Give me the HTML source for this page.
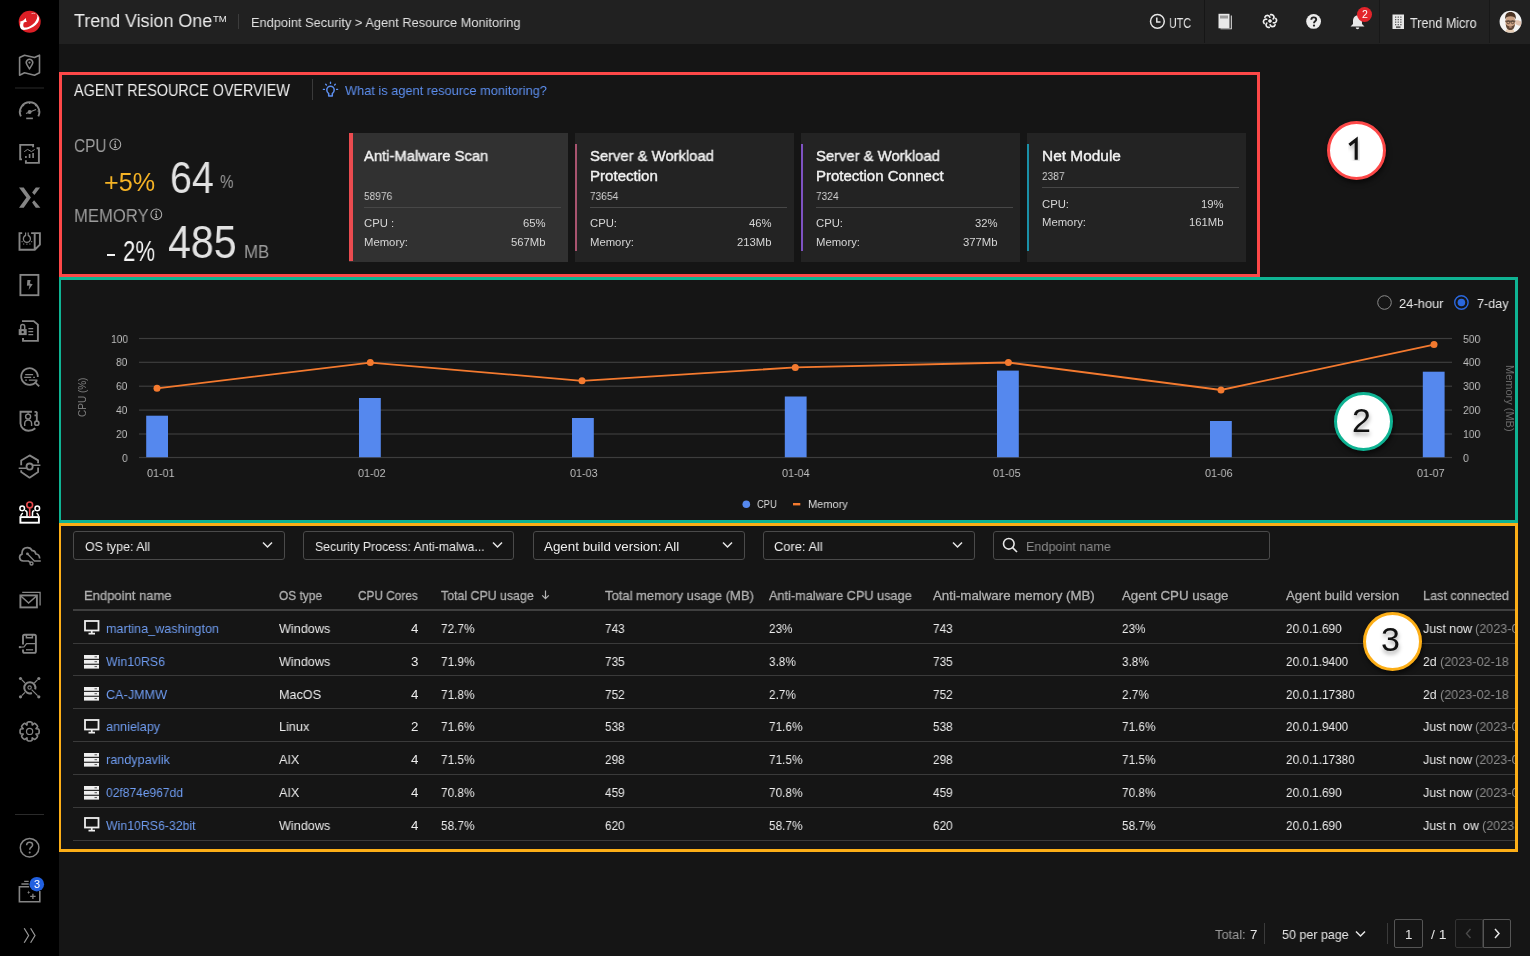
<!DOCTYPE html>
<html><head><meta charset="utf-8">
<style>
*{box-sizing:border-box;margin:0;padding:0}
html,body{width:1530px;height:956px;overflow:hidden;background:#151515;font-family:"Liberation Sans",sans-serif;color:#e6e6e6;position:relative}
.abs{position:absolute}
#side{position:absolute;left:0;top:0;width:59px;height:956px;background:#000;z-index:2}
#side svg{position:absolute}
.t{position:absolute;white-space:pre;line-height:1;will-change:transform}
.box{position:absolute;border:3px solid}
</style></head>
<body>
<div id="side">
<svg style="left:0;top:0" width="59" height="956" viewBox="0 0 59 956" fill="none" stroke="#858585" stroke-width="1.8"><circle cx="29.7" cy="21.7" r="11" fill="#dc1f26" stroke="none"/><path d="M35.2 13.4 C38 14.5 39.6 17 38.9 20.1 C38.2 23.2 34.5 26.8 30.3 28.3 C27 29.6 24 30.4 21.8 29.5 C19.9 28.6 19.6 25.2 20.6 22.6 L19.3 22 L23.2 20.6 L25.9 17.9 L26.1 20.5 L27.1 21.5 L23.9 22.5 C23.1 24.2 23 26.4 23.9 27.2 C25.3 28.2 28.5 27.3 32.6 24.4 C35.6 22.2 37.2 19.1 37.4 16.2 C37.4 15 36.6 14 35.2 13.4 Z" fill="#fff" stroke="none"/><path d="M31.5 13.6 C33 13.2 34.3 13.2 35.3 13.5" stroke="#f4c5c5" stroke-width="0.8"/><path d="M19.6 57.5 L24.5 55.2 L34.5 57.5 L39.5 55.2 L39.5 72.8 L34.5 75.2 L24.5 72.8 L19.6 75.2 Z" stroke-width="1.6" stroke-linejoin="round"/><path d="M29.5 69 L26.8 64.3 A3.2 3.2 0 1 1 32.2 64.3 Z" stroke-width="1.5" stroke-linejoin="round"/><circle cx="29.5" cy="62.6" r="1.1" fill="#858585" stroke="none"/><path d="M15 88 L44 88" stroke="#2a2a2a" stroke-width="1"/><path d="M20.9 116.3 A9.7 9.7 0 1 1 38.3 116.3" stroke-width="1.9"/><path d="M29.6 102.3 L29.6 104 M23 105 L24 106 M36.2 105 L35.2 106 M20.4 111 L21.6 111.2 M38.8 111 L37.6 111.2" stroke-width="1.2"/><circle cx="29.6" cy="112" r="2" fill="#858585" stroke="none"/><path d="M26 113.4 L36.1 109.4" stroke-width="1.1"/><path d="M26.2 118.4 L32.9 118.4" stroke-width="1.6"/><path d="M22 159.4 L20.2 159.4 L20.2 144.9 L33.1 144.9 L33.1 147.2" stroke-width="1.9"/><path d="M36.6 148.3 L38.9 148.3 L38.9 162.9 L25.9 162.9 L25.9 160.3" stroke-width="1.9"/><path d="M25.9 156 L25.9 157.9 M29.6 154.1 L29.6 158 M33.1 153.1 L33.1 158" stroke-width="1.6"/><path d="M24.2 151.7 L27.6 149.4 L31.4 151.6 L34.7 149.5" stroke-width="1"/><path d="M19 187.5 L23.7 187.5 L30.9 197.6 L23.7 207.8 L19 207.8 L26.4 197.6 Z M35.8 187.5 L40.1 187.5 L34.4 194.9 L32.1 192.4 Z M34.1 200.2 L40.4 207.8 L35.8 207.8 L32.1 202.4 Z" fill="#858585" stroke="none"/><path d="M22.2 233.1 L19.5 233.1 L19.5 249.7 L34.8 249.7 L39.9 244.6 L39.9 233.1 L31.1 233.1 M34.7 233.1 L34.7 249.7" stroke-width="1.9"/><path d="M25.6 232.5 L25.6 235.4 C23.8 236.3 23.2 238 23.4 239.5 C23.8 241.4 25.3 242.4 26.9 242.4 C28.5 242.4 30 241.4 30.4 239.5 C30.6 238 30 236.3 28.2 235.4 L28.2 232.5" stroke-width="1.2"/><path d="M21.6 241.6 L22.6 241.6 M31.2 241.6 L32.2 241.6 M23.9 243.5 L23.5 244.5 M26.9 243.6 L26.9 244.7 M29.7 243.5 L30.1 244.5" stroke-width="1.1"/><rect x="20.4" y="274.9" width="18" height="20.3" stroke-width="1.85"/><path d="M27.4 280 L30.7 280 L29.8 283.6 L32.7 284.3 L28.6 290 L29.5 285.6 L26.9 285.7 Z" fill="#858585" stroke="none"/><path d="M22 321.1 L33.7 321.1 L37.9 324.6 L37.9 340.9 L23 340.9 L23 338.1" stroke-width="1.9"/><rect x="18.7" y="329.1" width="8" height="6" fill="#858585" stroke="none"/><circle cx="22.7" cy="332.1" r="1.2" fill="#000" stroke="none"/><path d="M20.7 329.2 L20.7 326.6 A2 2 0 0 1 24.7 326.6 L24.7 329.2" stroke-width="1.5"/><path d="M28.4 328.6 L33.2 328.6 M28.4 331.6 L33.2 331.6 M28.4 334.6 L33.2 334.6" stroke-width="1.2"/><path d="M36.9 380.3 A8.3 8.3 0 1 1 37.8 377" stroke-width="1.8"/><path d="M35.6 382.8 L39.2 386.3" stroke-width="1.8"/><path d="M25.2 374.6 L33.1 374.6 M24.2 377.4 L31.2 377.4 M33.2 377.4 L34.9 377.4 M25.2 380.2 L26.9 380.2 M28.9 380.2 L37.4 380.2" stroke-width="1.3"/><path d="M31.9 411.8 L20.5 411.8 L20.5 423.5 C20.8 427.8 24.5 430.8 28.5 430.8 C31 430.8 33.5 429.8 35.3 428.2" stroke-width="1.9"/><circle cx="28.1" cy="416.6" r="2.5" stroke-width="1.4"/><path d="M24.7 425.9 L24.7 423.5 A3.45 3.45 0 0 1 31.6 423.5 L31.6 425.9" stroke-width="1.4"/><path d="M28.1 412 L28.1 414" stroke-width="1"/><path d="M36.8 411.8 L36.8 421.2 M34.5 411.8 L36.8 411.8 M34.5 415.4 L36.8 415.4" stroke-width="1.8"/><circle cx="36.8" cy="423.2" r="2.1" stroke-width="1.6"/><path d="M21.2 465.3 L21.2 460.4 L29.6 455.4 L38.1 460.4 L38.1 463.3 M38.1 467.6 L38.1 472.1 L29.6 477.7 L21.2 472.1 L21.2 470.2" stroke-width="1.8" stroke-linejoin="round"/><circle cx="29.6" cy="466.6" r="3.1" stroke-width="1.8"/><path d="M18.7 468.2 L26.4 468.2 M32.8 465.2 L40.4 465.2" stroke-width="1.5"/><rect x="20.4" y="517.1" width="18.5" height="5.6" stroke="#fff" stroke-width="1.9"/><path d="M20.8 516.2 C21 514.8 21.7 513.8 22.9 513.1 M27 516.4 L27 512.8 C27 511.3 26.2 510.6 25 510.4 M32.5 516.4 L32.5 512.8 C32.5 511.3 33.3 510.6 34.5 510.4 M38.6 516.2 C38.4 514.8 37.7 513.8 36.6 513.1" stroke="#fff" stroke-width="1.5"/><circle cx="22.2" cy="508.4" r="2.3" stroke="#fff" stroke-width="1.5"/><circle cx="37.3" cy="508.4" r="2.3" stroke="#fff" stroke-width="1.5"/><circle cx="29.7" cy="504.9" r="2.9" stroke="#e8494d" stroke-width="1.6"/><path d="M29.7 507.8 L29.7 516.3" stroke="#e8494d" stroke-width="1.6"/><path d="M39.7 558.5 C39.6 556.2 38.2 554.3 35.9 554 C35.3 551.5 33.8 550.3 32.1 550.6 C31 548.3 29.2 547.5 27.2 547.6 C24.3 547.7 22.2 549.8 22 552.8 L22 554.1 C20.4 554.6 19.5 556 19.6 557.7 C19.8 559.8 21.2 561 23.3 561 L28.4 561 L30.6 562.6" stroke-width="1.7"/><circle cx="27.4" cy="553.8" r="1.4" fill="#858585" stroke="none"/><path d="M27.4 553.8 L34.4 561 L40.8 561" stroke-width="1.3"/><circle cx="31.5" cy="563.5" r="1.5" stroke-width="1.4"/><rect x="20.4" y="595.4" width="16.5" height="12" stroke-width="1.9"/><path d="M20.8 596 L28.6 603.1 L36.5 596" stroke-width="1.5"/><path d="M22.2 592.3 L40.1 592.3 L40.1 605.5" stroke-width="1.3"/><path d="M23 644.4 L23 636.3 Q23 634.7 24.6 634.7 L34.3 634.7 Q35.9 634.7 35.9 636.3 L35.9 651.3 Q35.9 652.9 34.3 652.9 L24.6 652.9 Q23 652.9 23 651.3 L23 649.4" stroke-width="1.9"/><path d="M26.4 635 L26.4 637.7 L32.4 637.7 L32.4 635" stroke-width="1.5"/><path d="M20.5 647.1 L24 646.8 L26.6 643.6 L35.4 643.6" stroke-width="1.2"/><circle cx="19.9" cy="647.1" r="1.2" fill="#858585" stroke="none"/><path d="M26 649.8 L33.1 649.8" stroke-width="1.3"/><g fill="#858585" stroke="none"><circle cx="20.5" cy="678.5" r="1.6"/><circle cx="38.8" cy="678.5" r="1.6"/><circle cx="20.5" cy="696.8" r="1.6"/><circle cx="38.8" cy="696.8" r="1.6"/></g><path d="M21.7 679.7 L25 683 M37.6 679.7 L34.3 683 M21.7 695.6 L25 692.3 M31.6 689.6 L37.6 695.6" stroke-width="1.2"/><path d="M31.9 693 A5.6 5.6 0 1 1 35.2 689.4" stroke-width="2"/><circle cx="29.6" cy="687.6" r="1.7" stroke-width="1.1"/><path d="M27.19 722.42 L28.43 721.87 L30.77 721.87 L32.01 722.42 L32.24 725.03 L34.25 723.35 L35.51 723.84 L37.16 725.49 L37.65 726.75 L35.97 728.76 L38.58 728.99 L39.13 730.23 L39.13 732.57 L38.58 733.81 L35.97 734.04 L37.65 736.05 L37.16 737.31 L35.51 738.96 L34.25 739.45 L32.24 737.77 L32.01 740.38 L30.77 740.93 L28.43 740.93 L27.19 740.38 L26.96 737.77 L24.95 739.45 L23.69 738.96 L22.04 737.31 L21.55 736.05 L23.23 734.04 L20.62 733.81 L20.07 732.57 L20.07 730.23 L20.62 728.99 L23.23 728.76 L21.55 726.75 L22.04 725.49 L23.69 723.84 L24.95 723.35 L26.96 725.03 Z" stroke-width="1.6" stroke-linejoin="round"/><circle cx="29.6" cy="731.4" r="3.1" stroke-width="1.2"/><path d="M15 814.5 L44 814.5" stroke="#2a2a2a" stroke-width="1"/><circle cx="29.6" cy="847.7" r="9.3" stroke-width="1.5"/><path d="M26.6 845.3 C26.6 843.2 28 842.2 29.6 842.2 C31.4 842.2 32.6 843.4 32.6 844.9 C32.6 847 29.7 847.3 29.7 849.8" stroke-width="1.5"/><circle cx="29.7" cy="852.6" r="1" fill="#858585" stroke="none"/><path d="M29.1 886.7 L19.4 886.7 L19.4 901.8 L39.8 901.8 L39.8 891" stroke-width="1.6"/><path d="M24.2 881.4 L28.7 881.4 M21.4 884 L28.7 884" stroke-width="1.3"/><path d="M28.7 890.6 L29.2 892 L30.5 892.4 L29.2 892.8 L28.7 894.2 L28.2 892.8 L26.9 892.4 L28.2 892 Z" fill="#858585" stroke="none"/><path d="M30.2 896.4 L35.6 896.4 M32.9 893.7 L32.9 899.1" stroke-width="1.3"/><circle cx="36.8" cy="884.2" r="7.3" fill="#2160e0" stroke="none"/><path d="M24.2 928.2 L28.6 935.5 L24.2 942.8 M30.6 928.2 L35 935.5 L30.6 942.8" stroke="#9a9a9a" stroke-width="1.2"/></svg>
<div class="t" style="left:33.74px;top:878.99px;font-size:11.00px;color:#fff;">3</div>
</div>
<div class="abs" style="left:59.00px;top:0.00px;width:1471.00px;height:44.00px;background:#212121;"></div>
<div class="t" style="left:74.00px;top:11.77px;font-size:18.70px;color:#ececec;transform:scaleX(0.9572);transform-origin:0 0;">Trend Vision One</div>
<div class="t" style="left:212.60px;top:14.07px;font-size:9.60px;color:#ececec;">TM</div>
<div class="abs" style="left:238.00px;top:14.00px;width:1.00px;height:15.00px;background:#3c3c3c;"></div>
<div class="t" style="left:250.50px;top:16.07px;font-size:13.50px;color:#e0e0e0;transform:scaleX(0.9488);transform-origin:0 0;">Endpoint Security &gt; Agent Resource Monitoring</div>
<svg class="abs" style="left:1149px;top:13px" width="17" height="17" viewBox="0 0 17 17" fill="none" stroke="#e6e6e6" stroke-width="1.5"><circle cx="8.4" cy="8.3" r="6.9"/><path d="M7.8 4.5 L7.8 9 L11.5 9"/></svg>
<div class="t" style="left:1169.00px;top:15.65px;font-size:14.00px;color:#e6e6e6;transform:scaleX(0.7646);transform-origin:0 0;">UTC</div>
<div class="abs" style="left:1203.50px;top:0.00px;width:1.00px;height:43.00px;background:#161616;"></div>
<svg class="abs" style="left:1218px;top:13px" width="15" height="17" viewBox="0 0 15 17"><rect x="0.5" y="0.8" width="11" height="14.5" fill="#e8e8e8"/><rect x="2" y="2.5" width="8" height="3" fill="#9a9a9a"/><path d="M12.8 2.5 L13.8 2.5 L13.8 16.3 L2.5 16.3 L2.5 15.5 L12.8 15.5 Z" fill="#e8e8e8"/></svg>
<svg class="abs" style="left:1257.7px;top:9.3px" width="24" height="24" viewBox="0 0 24 24" fill="none" stroke="#f0f0f0" stroke-width="1.7" stroke-linecap="round"><path d="M12.74 5.68 A2.55 2.55 0 0 1 15.21 9.95" /><path d="M17.84 9.48 A2.55 2.55 0 0 1 15.38 13.75" /><path d="M17.10 15.80 A2.55 2.55 0 0 1 12.17 15.80" /><path d="M11.26 18.32 A2.55 2.55 0 0 1 8.79 14.05" /><path d="M6.16 14.52 A2.55 2.55 0 0 1 8.62 10.25" /><path d="M6.90 8.20 A2.55 2.55 0 0 1 11.83 8.20" /><path d="M12 9.9 L13.2 10.8 L14.1 12 L13.2 13.2 L12 14.1 L10.8 13.2 L9.9 12 L10.8 10.8 Z" fill="#f0f0f0" stroke="none"/></svg>
<svg class="abs" style="left:1306px;top:14px" width="16" height="16" viewBox="0 0 16 16"><circle cx="7.6" cy="7.4" r="7.4" fill="#ececec"/><path d="M5.3 5.8 C5.3 4.2 6.4 3.4 7.7 3.4 C9.2 3.4 10.2 4.3 10.2 5.6 C10.2 7.3 8 7.4 8 9.2" fill="none" stroke="#222" stroke-width="1.9"/><circle cx="8" cy="11.6" r="1.15" fill="#222"/></svg>
<svg class="abs" style="left:1349px;top:13px" width="18" height="17" viewBox="0 0 18 17"><path d="M8.5 2.5 C5.5 2.5 4 5 4 8 L4 11 L1.5 13.5 L15.5 13.5 L13 11 L13 8 C13 5 11.5 2.5 8.5 2.5 Z" fill="#e8e8e8"/><path d="M6.8 14.5 L10.2 14.5 C10.2 15.6 9.5 16.2 8.5 16.2 C7.5 16.2 6.8 15.6 6.8 14.5 Z" fill="#e8e8e8"/></svg>
<div class="abs" style="left:1357px;top:7px;width:15px;height:15px;border-radius:50%;background:#e3242b"></div>
<div class="t" style="left:1361.68px;top:9.41px;font-size:10.50px;color:#fff;">2</div>
<div class="abs" style="left:1379.00px;top:0.00px;width:1.00px;height:43.00px;background:#181818;"></div>
<svg class="abs" style="left:1392px;top:14px" width="13" height="16" viewBox="0 0 13 16"><rect x="0.5" y="0.5" width="11.5" height="14.5" fill="#e8e8e8"/><g fill="#5a5a5a"><rect x="3" y="2.5" width="1.3" height="1.3"/><rect x="5.6" y="2.5" width="1.3" height="1.3"/><rect x="8.2" y="2.5" width="1.3" height="1.3"/><rect x="3" y="5" width="1.3" height="1.3"/><rect x="5.6" y="5" width="1.3" height="1.3"/><rect x="8.2" y="5" width="1.3" height="1.3"/><rect x="3" y="7.5" width="1.3" height="1.3"/><rect x="5.6" y="7.5" width="1.3" height="1.3"/><rect x="8.2" y="7.5" width="1.3" height="1.3"/><rect x="3" y="10" width="1.3" height="1.3"/><rect x="5.6" y="10" width="1.3" height="1.3"/><rect x="8.2" y="10" width="1.3" height="1.3"/><rect x="4" y="12.3" width="4.5" height="1.8"/></g></svg>
<div class="t" style="left:1409.50px;top:15.65px;font-size:14.00px;color:#e6e6e6;transform:scaleX(0.8966);transform-origin:0 0;">Trend Micro</div>
<div class="abs" style="left:1488.50px;top:0.00px;width:1.00px;height:43.00px;background:#181818;"></div>
<svg class="abs" style="left:1496px;top:7px" width="30" height="30" viewBox="0 0 30 30"><defs><clipPath id="avc"><circle cx="14.6" cy="14.7" r="10.9"/></clipPath></defs><circle cx="14.6" cy="14.7" r="11" fill="#f4f4f4"/><g clip-path="url(#avc)"><path d="M8.5 27 C9 23 11 21.5 14 21.5 C17 21.5 18.5 23 19 27 Z" fill="#e6cdb5"/><ellipse cx="14.4" cy="15" rx="5" ry="7" fill="#caa184"/><path d="M9.2 12.5 C8.8 7 11 5 14.5 5 C18 5 20.3 7 19.8 12.5 C19 10 17.5 9.3 14.5 9.3 C11.5 9.3 10 10 9.2 12.5 Z" fill="#4b3424"/><path d="M9.8 17 C10 21.5 12 23 14.4 23 C16.8 23 18.6 21.5 18.9 17 C18 18.5 16.5 19.5 14.4 19.5 C12.3 19.5 10.8 18.5 9.8 17 Z" fill="#5e4636"/><ellipse cx="14.4" cy="20" rx="1.6" ry="0.8" fill="#b88a78"/><path d="M9.3 14.3 L19.6 14.3" stroke="#6e5a4c" stroke-width="1.6"/><circle cx="12.3" cy="15.2" r="1.5" fill="none" stroke="#5a463a" stroke-width="0.9"/><circle cx="16.6" cy="15.2" r="1.5" fill="none" stroke="#5a463a" stroke-width="0.9"/><path d="M19.5 13.5 C21.5 13 24 13.5 25.5 15 L25.5 19 C23.5 19 21 18 19.5 17 Z" fill="#e2c3b0"/></g></svg>
<div class="t" style="left:74.00px;top:82.11px;font-size:16.40px;color:#f0f0f0;transform:scaleX(0.8768);transform-origin:0 0;">AGENT RESOURCE OVERVIEW</div>
<div class="abs" style="left:312.00px;top:79.00px;width:1.00px;height:21.00px;background:#3a3a3a;"></div>
<svg class="abs" style="left:318px;top:78px" width="24" height="24" viewBox="0 0 24 24" fill="none" stroke="#5d8ff0" stroke-width="1.5" stroke-linecap="round"><path d="M10.7 15.6 C9.5 14.8 8.8 13.5 8.8 12 A3.7 3.7 0 0 1 16.2 12 C16.2 13.5 15.5 14.8 14.3 15.6 L14.3 17.9 L10.7 17.9 Z" stroke-linejoin="round"/><path d="M12.5 4.2 L12.5 5.4 M7.7 6.2 L8.4 6.9 M17.3 6.2 L16.6 6.9 M5.4 11.4 L6.4 11.4 M18.6 11.4 L19.6 11.4" stroke-width="1.4"/></svg>
<div class="t" style="left:345.00px;top:83.57px;font-size:13.50px;color:#5d8ff0;transform:scaleX(0.9479);transform-origin:0 0;">What is agent resource monitoring?</div>
<div class="t" style="left:73.70px;top:137.18px;font-size:18.80px;color:#9c9c9c;transform:scaleX(0.8213);transform-origin:0 0;">CPU</div>
<svg class="abs" style="left:109px;top:138px" width="13" height="13" viewBox="0 0 13 13"><circle cx="6.3" cy="6.4" r="5.4" fill="none" stroke="#a8a8a8" stroke-width="1.1"/><circle cx="6.3" cy="3.7" r="0.9" fill="#a8a8a8"/><path d="M5 5.5 L6.9 5.5 L6.9 9 L7.7 9 L7.7 9.9 L4.9 9.9 L4.9 9 L5.7 9 L5.7 6.4 L5 6.4 Z" fill="#a8a8a8"/></svg>
<div class="t" style="left:103.80px;top:170.43px;font-size:25.00px;color:#f5b325;transform:scaleX(1.0053);transform-origin:0 0;">+5%</div>
<div class="t" style="left:170.00px;top:155.00px;font-size:45.00px;color:#e2e2e2;transform:scaleX(0.8750);transform-origin:0 0;">64</div>
<div class="t" style="left:219.80px;top:173.78px;font-size:17.50px;color:#9c9c9c;transform:scaleX(0.8740);transform-origin:0 0;">%</div>
<div class="t" style="left:74.30px;top:206.76px;font-size:18.00px;color:#9c9c9c;transform:scaleX(0.9247);transform-origin:0 0;">MEMORY</div>
<svg class="abs" style="left:150px;top:208px" width="13" height="13" viewBox="0 0 13 13"><circle cx="6.3" cy="6.4" r="5.4" fill="none" stroke="#a8a8a8" stroke-width="1.1"/><circle cx="6.3" cy="3.7" r="0.9" fill="#a8a8a8"/><path d="M5 5.5 L6.9 5.5 L6.9 9 L7.7 9 L7.7 9.9 L4.9 9.9 L4.9 9 L5.7 9 L5.7 6.4 L5 6.4 Z" fill="#a8a8a8"/></svg>
<div class="abs" style="left:106.80px;top:253.50px;width:8.00px;height:2.00px;background:#f4f4f4;"></div>
<div class="t" style="left:122.90px;top:237.45px;font-size:29.00px;color:#f4f4f4;transform:scaleX(0.7635);transform-origin:0 0;">2%</div>
<div class="t" style="left:168.40px;top:219.98px;font-size:45.50px;color:#e2e2e2;transform:scaleX(0.9049);transform-origin:0 0;">485</div>
<div class="t" style="left:243.90px;top:243.68px;font-size:17.50px;color:#9c9c9c;transform:scaleX(0.9638);transform-origin:0 0;">MB</div>
<div class="abs" style="left:349.00px;top:133.00px;width:219.00px;height:129.00px;background:#313131;"></div>
<div class="abs" style="left:349.00px;top:133.00px;width:3.50px;height:128.00px;background:#ea4b4f;"></div>
<div class="t" style="left:363.50px;top:148.10px;font-size:15.00px;color:#f2f2f2;transform:scaleX(0.9874);transform-origin:0 0;-webkit-text-stroke:0.4px #f2f2f2;">Anti-Malware Scan</div>
<div class="t" style="left:363.50px;top:190.81px;font-size:11.80px;color:#cfcfcf;transform:scaleX(0.8600);transform-origin:0 0;">58976</div>
<div class="abs" style="left:363.50px;top:207.00px;width:197.50px;height:1.00px;background:#474747;"></div>
<div class="t" style="left:363.50px;top:218.43px;font-size:11.30px;color:#d6d6d6;">CPU :</div>
<div class="t" style="left:363.50px;top:236.53px;font-size:11.30px;color:#d6d6d6;">Memory:</div>
<div class="t" style="left:522.88px;top:218.43px;font-size:11.30px;color:#d6d6d6;">65%</div>
<div class="t" style="left:510.95px;top:236.53px;font-size:11.30px;color:#d6d6d6;">567Mb</div>
<div class="abs" style="left:575.00px;top:133.00px;width:219.00px;height:129.00px;background:#232323;"></div>
<div class="abs" style="left:575.00px;top:143.80px;width:2.00px;height:107.50px;background:#a8536f;"></div>
<div class="t" style="left:589.80px;top:148.10px;font-size:15.00px;color:#f2f2f2;transform:scaleX(0.9864);transform-origin:0 0;-webkit-text-stroke:0.4px #f2f2f2;">Server &amp; Workload</div>
<div class="t" style="left:589.80px;top:168.10px;font-size:15.00px;color:#f2f2f2;transform:scaleX(1.0053);transform-origin:0 0;-webkit-text-stroke:0.4px #f2f2f2;">Protection</div>
<div class="t" style="left:589.80px;top:190.81px;font-size:11.80px;color:#cfcfcf;transform:scaleX(0.8600);transform-origin:0 0;">73654</div>
<div class="abs" style="left:589.80px;top:207.00px;width:197.20px;height:1.00px;background:#474747;"></div>
<div class="t" style="left:589.80px;top:218.43px;font-size:11.30px;color:#d6d6d6;">CPU:</div>
<div class="t" style="left:589.80px;top:236.53px;font-size:11.30px;color:#d6d6d6;">Memory:</div>
<div class="t" style="left:748.88px;top:218.43px;font-size:11.30px;color:#d6d6d6;">46%</div>
<div class="t" style="left:736.95px;top:236.53px;font-size:11.30px;color:#d6d6d6;">213Mb</div>
<div class="abs" style="left:801.00px;top:133.00px;width:219.00px;height:129.00px;background:#232323;"></div>
<div class="abs" style="left:801.00px;top:143.80px;width:2.00px;height:107.50px;background:#7e52c2;"></div>
<div class="t" style="left:815.80px;top:148.10px;font-size:15.00px;color:#f2f2f2;transform:scaleX(0.9864);transform-origin:0 0;-webkit-text-stroke:0.4px #f2f2f2;">Server &amp; Workload</div>
<div class="t" style="left:815.80px;top:168.10px;font-size:15.00px;color:#f2f2f2;-webkit-text-stroke:0.4px #f2f2f2;">Protection Connect</div>
<div class="t" style="left:815.80px;top:190.81px;font-size:11.80px;color:#cfcfcf;transform:scaleX(0.8600);transform-origin:0 0;">7324</div>
<div class="abs" style="left:815.80px;top:207.00px;width:197.20px;height:1.00px;background:#474747;"></div>
<div class="t" style="left:815.80px;top:218.43px;font-size:11.30px;color:#d6d6d6;">CPU:</div>
<div class="t" style="left:815.80px;top:236.53px;font-size:11.30px;color:#d6d6d6;">Memory:</div>
<div class="t" style="left:974.88px;top:218.43px;font-size:11.30px;color:#d6d6d6;">32%</div>
<div class="t" style="left:962.95px;top:236.53px;font-size:11.30px;color:#d6d6d6;">377Mb</div>
<div class="abs" style="left:1027.00px;top:133.00px;width:219.00px;height:129.00px;background:#232323;"></div>
<div class="abs" style="left:1027.00px;top:143.80px;width:2.00px;height:107.50px;background:#1a90a8;"></div>
<div class="t" style="left:1041.80px;top:148.10px;font-size:15.00px;color:#f2f2f2;transform:scaleX(1.0286);transform-origin:0 0;-webkit-text-stroke:0.4px #f2f2f2;">Net Module</div>
<div class="t" style="left:1041.80px;top:170.71px;font-size:11.80px;color:#cfcfcf;transform:scaleX(0.8600);transform-origin:0 0;">2387</div>
<div class="abs" style="left:1041.80px;top:187.40px;width:197.20px;height:1.00px;background:#474747;"></div>
<div class="t" style="left:1041.80px;top:198.53px;font-size:11.30px;color:#d6d6d6;">CPU:</div>
<div class="t" style="left:1041.80px;top:216.63px;font-size:11.30px;color:#d6d6d6;">Memory:</div>
<div class="t" style="left:1200.88px;top:198.53px;font-size:11.30px;color:#d6d6d6;">19%</div>
<div class="t" style="left:1188.95px;top:216.63px;font-size:11.30px;color:#d6d6d6;">161Mb</div>
<svg class="abs" style="left:1376px;top:294px" width="140" height="17" viewBox="0 0 140 17"><circle cx="8.5" cy="8.5" r="6.8" fill="none" stroke="#8a8a8a" stroke-width="1"/><circle cx="85.4" cy="8.5" r="6.7" fill="none" stroke="#2a67dd" stroke-width="1.4"/><circle cx="85.4" cy="8.5" r="3.8" fill="#2a67dd"/></svg>
<div class="t" style="left:1399.40px;top:296.82px;font-size:13.20px;color:#e8e8e8;transform:scaleX(0.9802);transform-origin:0 0;">24-hour</div>
<div class="t" style="left:1476.90px;top:296.82px;font-size:13.20px;color:#e8e8e8;transform:scaleX(0.9539);transform-origin:0 0;">7-day</div>
<svg class="abs" style="left:0;top:0" width="1530" height="956" viewBox="0 0 1530 956">
<rect x="139" y="337.9" width="1313" height="1.2" fill="#3d3d3d"/>
<rect x="139" y="361.7" width="1313" height="1.2" fill="#3d3d3d"/>
<rect x="139" y="385.6" width="1313" height="1.2" fill="#3d3d3d"/>
<rect x="139" y="409.5" width="1313" height="1.2" fill="#3d3d3d"/>
<rect x="139" y="433.4" width="1313" height="1.2" fill="#3d3d3d"/>
<rect x="139" y="456.9" width="1313" height="1.2" fill="#3d3d3d"/>
<rect x="146.2" y="415.7" width="21.8" height="41.5" fill="#5588ee"/>
<rect x="359.0" y="398.0" width="21.8" height="59.2" fill="#5588ee"/>
<rect x="572.0" y="418.0" width="21.8" height="39.2" fill="#5588ee"/>
<rect x="784.8" y="396.5" width="21.8" height="60.7" fill="#5588ee"/>
<rect x="997.0" y="370.6" width="21.8" height="86.6" fill="#5588ee"/>
<rect x="1210.0" y="421.0" width="21.8" height="36.2" fill="#5588ee"/>
<rect x="1422.8" y="371.7" width="21.8" height="85.5" fill="#5588ee"/>
<polyline points="157.0,388.3 370.3,362.6 582.0,380.8 795.3,367.4 1008.4,362.5 1221.0,390.0 1434.0,344.6" fill="none" stroke="#f47a2f" stroke-width="1.8"/>
<circle cx="157.0" cy="388.3" r="3.5" fill="#f47a2f"/>
<circle cx="370.3" cy="362.6" r="3.5" fill="#f47a2f"/>
<circle cx="582.0" cy="380.8" r="3.5" fill="#f47a2f"/>
<circle cx="795.3" cy="367.4" r="3.5" fill="#f47a2f"/>
<circle cx="1008.4" cy="362.5" r="3.5" fill="#f47a2f"/>
<circle cx="1221.0" cy="390.0" r="3.5" fill="#f47a2f"/>
<circle cx="1434.0" cy="344.6" r="3.5" fill="#f47a2f"/>
<circle cx="746.3" cy="504.3" r="3.8" fill="#5588ee"/>
<rect x="793" y="503" width="7.3" height="2.4" fill="#f47a2f"/>
</svg>
<div class="t" style="left:110.69px;top:333.52px;font-size:11.20px;color:#bdbdbd;transform:scaleX(0.9100);transform-origin:0 0;">100</div>
<div class="t" style="left:116.36px;top:357.32px;font-size:11.20px;color:#bdbdbd;transform:scaleX(0.9100);transform-origin:0 0;">80</div>
<div class="t" style="left:116.36px;top:381.22px;font-size:11.20px;color:#bdbdbd;transform:scaleX(0.9100);transform-origin:0 0;">60</div>
<div class="t" style="left:116.36px;top:405.12px;font-size:11.20px;color:#bdbdbd;transform:scaleX(0.9100);transform-origin:0 0;">40</div>
<div class="t" style="left:116.36px;top:429.02px;font-size:11.20px;color:#bdbdbd;transform:scaleX(0.9100);transform-origin:0 0;">20</div>
<div class="t" style="left:122.03px;top:452.52px;font-size:11.20px;color:#bdbdbd;transform:scaleX(0.9100);transform-origin:0 0;">0</div>
<div class="t" style="left:1463.40px;top:333.52px;font-size:11.20px;color:#bdbdbd;transform:scaleX(0.9250);transform-origin:0 0;">500</div>
<div class="t" style="left:1463.40px;top:357.32px;font-size:11.20px;color:#bdbdbd;transform:scaleX(0.9250);transform-origin:0 0;">400</div>
<div class="t" style="left:1463.40px;top:381.22px;font-size:11.20px;color:#bdbdbd;transform:scaleX(0.9250);transform-origin:0 0;">300</div>
<div class="t" style="left:1463.40px;top:405.12px;font-size:11.20px;color:#bdbdbd;transform:scaleX(0.9250);transform-origin:0 0;">200</div>
<div class="t" style="left:1463.40px;top:429.02px;font-size:11.20px;color:#bdbdbd;transform:scaleX(0.9250);transform-origin:0 0;">100</div>
<div class="t" style="left:1463.40px;top:452.52px;font-size:11.20px;color:#bdbdbd;transform:scaleX(0.9250);transform-origin:0 0;">0</div>
<div class="t" style="left:146.65px;top:468.12px;font-size:11.20px;color:#bdbdbd;transform:scaleX(0.9600);transform-origin:0 0;">01-01</div>
<div class="t" style="left:358.30px;top:468.12px;font-size:11.20px;color:#bdbdbd;transform:scaleX(0.9600);transform-origin:0 0;">01-02</div>
<div class="t" style="left:569.95px;top:468.12px;font-size:11.20px;color:#bdbdbd;transform:scaleX(0.9600);transform-origin:0 0;">01-03</div>
<div class="t" style="left:781.60px;top:468.12px;font-size:11.20px;color:#bdbdbd;transform:scaleX(0.9600);transform-origin:0 0;">01-04</div>
<div class="t" style="left:993.25px;top:468.12px;font-size:11.20px;color:#bdbdbd;transform:scaleX(0.9600);transform-origin:0 0;">01-05</div>
<div class="t" style="left:1204.90px;top:468.12px;font-size:11.20px;color:#bdbdbd;transform:scaleX(0.9600);transform-origin:0 0;">01-06</div>
<div class="t" style="left:1416.55px;top:468.12px;font-size:11.20px;color:#bdbdbd;transform:scaleX(0.9600);transform-origin:0 0;">01-07</div>
<div class="t" style="left:77.5px;top:416.5px;font-size:10px;color:#7c7c7c;transform:rotate(-90deg);transform-origin:0 0">CPU (%)</div>
<div class="t" style="left:1514.5px;top:365.0px;font-size:11px;color:#6a6a6a;transform:rotate(90deg);transform-origin:0 0">Memory (MB)</div>
<div class="t" style="left:757.40px;top:499.16px;font-size:11.50px;color:#dedede;transform:scaleX(0.8113);transform-origin:0 0;">CPU</div>
<div class="t" style="left:807.80px;top:499.16px;font-size:11.50px;color:#dedede;transform:scaleX(0.9583);transform-origin:0 0;">Memory</div>
<div class="abs" style="left:73.2px;top:530.5px;width:211.8px;height:29px;border:1px solid #4a4a4a;border-radius:3px"></div>
<div class="t" style="left:84.50px;top:539.54px;font-size:13.30px;color:#ececec;transform:scaleX(0.9354);transform-origin:0 0;">OS type: All</div>
<svg class="abs" style="left:262.0px;top:541px" width="11" height="8" viewBox="0 0 11 8"><path d="M1 1.5 L5.5 6 L10 1.5" fill="none" stroke="#e6e6e6" stroke-width="1.5"/></svg>
<div class="abs" style="left:303.3px;top:530.5px;width:211.2px;height:29px;border:1px solid #4a4a4a;border-radius:3px"></div>
<div class="t" style="left:314.60px;top:539.54px;font-size:13.30px;color:#ececec;transform:scaleX(0.9258);transform-origin:0 0;">Security Process: Anti-malwa...</div>
<svg class="abs" style="left:491.5px;top:541px" width="11" height="8" viewBox="0 0 11 8"><path d="M1 1.5 L5.5 6 L10 1.5" fill="none" stroke="#e6e6e6" stroke-width="1.5"/></svg>
<div class="abs" style="left:533.0px;top:530.5px;width:211.5px;height:29px;border:1px solid #4a4a4a;border-radius:3px"></div>
<div class="t" style="left:544.30px;top:539.54px;font-size:13.30px;color:#ececec;transform:scaleX(1.0055);transform-origin:0 0;">Agent build version: All</div>
<svg class="abs" style="left:721.5px;top:541px" width="11" height="8" viewBox="0 0 11 8"><path d="M1 1.5 L5.5 6 L10 1.5" fill="none" stroke="#e6e6e6" stroke-width="1.5"/></svg>
<div class="abs" style="left:763.0px;top:530.5px;width:211.5px;height:29px;border:1px solid #4a4a4a;border-radius:3px"></div>
<div class="t" style="left:774.30px;top:539.54px;font-size:13.30px;color:#ececec;transform:scaleX(0.9688);transform-origin:0 0;">Core: All</div>
<svg class="abs" style="left:951.5px;top:541px" width="11" height="8" viewBox="0 0 11 8"><path d="M1 1.5 L5.5 6 L10 1.5" fill="none" stroke="#e6e6e6" stroke-width="1.5"/></svg>
<div class="abs" style="left:992.5px;top:530.5px;width:277px;height:29px;border:1px solid #4a4a4a;border-radius:3px"></div>
<svg class="abs" style="left:1002px;top:537px" width="16" height="16" viewBox="0 0 16 16" fill="none" stroke="#e6e6e6" stroke-width="1.6"><circle cx="6.8" cy="6.8" r="5.3"/><path d="M10.6 10.6 L15 15"/></svg>
<div class="t" style="left:1025.70px;top:539.54px;font-size:13.30px;color:#8a8a8a;transform:scaleX(0.9489);transform-origin:0 0;">Endpoint name</div>
<div class="t" style="left:84.20px;top:588.94px;font-size:13.30px;color:#b0b0b0;transform:scaleX(0.9791);transform-origin:0 0;-webkit-text-stroke:0.3px #b0b0b0;">Endpoint name</div>
<div class="t" style="left:279.00px;top:588.94px;font-size:13.30px;color:#b0b0b0;transform:scaleX(0.8949);transform-origin:0 0;-webkit-text-stroke:0.3px #b0b0b0;">OS type</div>
<div class="t" style="left:357.60px;top:588.94px;font-size:13.30px;color:#b0b0b0;transform:scaleX(0.8891);transform-origin:0 0;-webkit-text-stroke:0.3px #b0b0b0;">CPU Cores</div>
<div class="t" style="left:441.30px;top:588.94px;font-size:13.30px;color:#b0b0b0;transform:scaleX(0.9288);transform-origin:0 0;-webkit-text-stroke:0.3px #b0b0b0;">Total CPU usage</div>
<div class="t" style="left:605.30px;top:588.94px;font-size:13.30px;color:#b0b0b0;transform:scaleX(0.9779);transform-origin:0 0;-webkit-text-stroke:0.3px #b0b0b0;">Total memory usage (MB)</div>
<div class="t" style="left:769.30px;top:588.94px;font-size:13.30px;color:#b0b0b0;transform:scaleX(0.9557);transform-origin:0 0;-webkit-text-stroke:0.3px #b0b0b0;">Anti-malware CPU usage</div>
<div class="t" style="left:933.40px;top:588.94px;font-size:13.30px;color:#b0b0b0;-webkit-text-stroke:0.3px #b0b0b0;">Anti-malware memory (MB)</div>
<div class="t" style="left:1122.20px;top:588.94px;font-size:13.30px;color:#b0b0b0;-webkit-text-stroke:0.3px #b0b0b0;">Agent CPU usage</div>
<div class="t" style="left:1286.20px;top:588.94px;font-size:13.30px;color:#b0b0b0;-webkit-text-stroke:0.3px #b0b0b0;">Agent build version</div>
<div class="t" style="left:1422.70px;top:588.94px;font-size:13.30px;color:#b0b0b0;transform:scaleX(0.9522);transform-origin:0 0;-webkit-text-stroke:0.3px #b0b0b0;">Last connected</div>
<svg class="abs" style="left:541px;top:590px" width="9" height="10" viewBox="0 0 9 10" fill="none" stroke="#b4b4b4" stroke-width="1.2"><path d="M4.5 0.5 L4.5 8.5 M1.2 5.3 L4.5 8.6 L7.8 5.3"/></svg>
<div class="abs" style="left:73.00px;top:608.70px;width:1442.00px;height:2.00px;background:#3f3f3f;"></div>
<svg class="abs" style="left:83.5px;top:620.1px" width="16" height="15" viewBox="0 0 16 15"><rect x="1" y="1" width="13.5" height="9.5" fill="none" stroke="#eeeeee" stroke-width="1.8"/><path d="M7.75 10.5 L7.75 13 M4.5 13.6 L11 13.6" stroke="#eeeeee" stroke-width="1.7"/></svg>
<div class="t" style="left:105.80px;top:621.84px;font-size:13.30px;color:#6f9cf0;transform:scaleX(0.9500);transform-origin:0 0;">martina_washington</div>
<div class="t" style="left:279.00px;top:621.84px;font-size:13.30px;color:#ececec;transform:scaleX(0.9500);transform-origin:0 0;">Windows</div>
<div class="t" style="left:411.30px;top:621.84px;font-size:13.30px;color:#ececec;">4</div>
<div class="t" style="left:441.30px;top:621.84px;font-size:13.30px;color:#ececec;transform:scaleX(0.8850);transform-origin:0 0;">72.7%</div>
<div class="t" style="left:605.30px;top:621.84px;font-size:13.30px;color:#ececec;transform:scaleX(0.8850);transform-origin:0 0;">743</div>
<div class="t" style="left:769.30px;top:621.84px;font-size:13.30px;color:#ececec;transform:scaleX(0.8850);transform-origin:0 0;">23%</div>
<div class="t" style="left:933.40px;top:621.84px;font-size:13.30px;color:#ececec;transform:scaleX(0.8850);transform-origin:0 0;">743</div>
<div class="t" style="left:1122.20px;top:621.84px;font-size:13.30px;color:#ececec;transform:scaleX(0.8850);transform-origin:0 0;">23%</div>
<div class="t" style="left:1286.20px;top:621.84px;font-size:13.30px;color:#ececec;transform:scaleX(0.8850);transform-origin:0 0;">20.0.1.690</div>
<div class="abs" style="left:1422.6px;top:618.1px;width:92.4px;height:20px;overflow:hidden">
<div class="t" style="left:0.00px;top:3.74px;font-size:13.30px;color:#ececec;transform:scaleX(0.9350);transform-origin:0 0;">Just now</div>
<div class="t" style="left:52.87px;top:3.74px;font-size:13.30px;color:#8c8c8c;transform:scaleX(0.9500);transform-origin:0 0;">(2023-0</div>
</div>
<div class="abs" style="left:73.00px;top:643.00px;width:1442.00px;height:1.00px;background:#3a3a3a;"></div>
<svg class="abs" style="left:84px;top:654.5px" width="15" height="14" viewBox="0 0 15 14"><rect x="0" y="0" width="15" height="3.8" fill="#eeeeee"/><rect x="0" y="4.9" width="15" height="3.8" fill="#eeeeee"/><rect x="0" y="9.8" width="15" height="3.8" fill="#eeeeee"/><g fill="#555"><rect x="10.5" y="1.3" width="2.5" height="1"/><rect x="10.5" y="6.2" width="2.5" height="1"/><rect x="10.5" y="11.1" width="2.5" height="1"/></g></svg>
<div class="t" style="left:105.80px;top:654.69px;font-size:13.30px;color:#6f9cf0;transform:scaleX(0.9273);transform-origin:0 0;">Win10RS6</div>
<div class="t" style="left:279.00px;top:654.69px;font-size:13.30px;color:#ececec;transform:scaleX(0.9500);transform-origin:0 0;">Windows</div>
<div class="t" style="left:411.30px;top:654.69px;font-size:13.30px;color:#ececec;">3</div>
<div class="t" style="left:441.30px;top:654.69px;font-size:13.30px;color:#ececec;transform:scaleX(0.8850);transform-origin:0 0;">71.9%</div>
<div class="t" style="left:605.30px;top:654.69px;font-size:13.30px;color:#ececec;transform:scaleX(0.8850);transform-origin:0 0;">735</div>
<div class="t" style="left:769.30px;top:654.69px;font-size:13.30px;color:#ececec;transform:scaleX(0.8850);transform-origin:0 0;">3.8%</div>
<div class="t" style="left:933.40px;top:654.69px;font-size:13.30px;color:#ececec;transform:scaleX(0.8850);transform-origin:0 0;">735</div>
<div class="t" style="left:1122.20px;top:654.69px;font-size:13.30px;color:#ececec;transform:scaleX(0.8850);transform-origin:0 0;">3.8%</div>
<div class="t" style="left:1286.20px;top:654.69px;font-size:13.30px;color:#ececec;transform:scaleX(0.8850);transform-origin:0 0;">20.0.1.9400</div>
<div class="abs" style="left:1422.6px;top:651.0px;width:92.4px;height:20px;overflow:hidden">
<div class="t" style="left:0.00px;top:3.74px;font-size:13.30px;color:#ececec;transform:scaleX(0.9100);transform-origin:0 0;">2d</div>
<div class="t" style="left:17.26px;top:3.74px;font-size:13.30px;color:#8c8c8c;transform:scaleX(0.9500);transform-origin:0 0;">(2023-02-18</div>
</div>
<div class="abs" style="left:73.00px;top:675.00px;width:1442.00px;height:1.00px;background:#3a3a3a;"></div>
<svg class="abs" style="left:84px;top:687.3px" width="15" height="14" viewBox="0 0 15 14"><rect x="0" y="0" width="15" height="3.8" fill="#eeeeee"/><rect x="0" y="4.9" width="15" height="3.8" fill="#eeeeee"/><rect x="0" y="9.8" width="15" height="3.8" fill="#eeeeee"/><g fill="#555"><rect x="10.5" y="1.3" width="2.5" height="1"/><rect x="10.5" y="6.2" width="2.5" height="1"/><rect x="10.5" y="11.1" width="2.5" height="1"/></g></svg>
<div class="t" style="left:105.80px;top:687.54px;font-size:13.30px;color:#6f9cf0;transform:scaleX(0.9500);transform-origin:0 0;">CA-JMMW</div>
<div class="t" style="left:279.00px;top:687.54px;font-size:13.30px;color:#ececec;transform:scaleX(0.9500);transform-origin:0 0;">MacOS</div>
<div class="t" style="left:411.30px;top:687.54px;font-size:13.30px;color:#ececec;">4</div>
<div class="t" style="left:441.30px;top:687.54px;font-size:13.30px;color:#ececec;transform:scaleX(0.8850);transform-origin:0 0;">71.8%</div>
<div class="t" style="left:605.30px;top:687.54px;font-size:13.30px;color:#ececec;transform:scaleX(0.8850);transform-origin:0 0;">752</div>
<div class="t" style="left:769.30px;top:687.54px;font-size:13.30px;color:#ececec;transform:scaleX(0.8850);transform-origin:0 0;">2.7%</div>
<div class="t" style="left:933.40px;top:687.54px;font-size:13.30px;color:#ececec;transform:scaleX(0.8850);transform-origin:0 0;">752</div>
<div class="t" style="left:1122.20px;top:687.54px;font-size:13.30px;color:#ececec;transform:scaleX(0.8850);transform-origin:0 0;">2.7%</div>
<div class="t" style="left:1286.20px;top:687.54px;font-size:13.30px;color:#ececec;transform:scaleX(0.8850);transform-origin:0 0;">20.0.1.17380</div>
<div class="abs" style="left:1422.6px;top:683.8px;width:92.4px;height:20px;overflow:hidden">
<div class="t" style="left:0.00px;top:3.74px;font-size:13.30px;color:#ececec;transform:scaleX(0.9100);transform-origin:0 0;">2d</div>
<div class="t" style="left:17.26px;top:3.74px;font-size:13.30px;color:#8c8c8c;transform:scaleX(0.9500);transform-origin:0 0;">(2023-02-18</div>
</div>
<div class="abs" style="left:73.00px;top:708.00px;width:1442.00px;height:1.00px;background:#3a3a3a;"></div>
<svg class="abs" style="left:83.5px;top:718.7px" width="16" height="15" viewBox="0 0 16 15"><rect x="1" y="1" width="13.5" height="9.5" fill="none" stroke="#eeeeee" stroke-width="1.8"/><path d="M7.75 10.5 L7.75 13 M4.5 13.6 L11 13.6" stroke="#eeeeee" stroke-width="1.7"/></svg>
<div class="t" style="left:105.80px;top:720.39px;font-size:13.30px;color:#6f9cf0;transform:scaleX(0.9500);transform-origin:0 0;">annielapy</div>
<div class="t" style="left:279.00px;top:720.39px;font-size:13.30px;color:#ececec;transform:scaleX(0.9500);transform-origin:0 0;">Linux</div>
<div class="t" style="left:411.30px;top:720.39px;font-size:13.30px;color:#ececec;">2</div>
<div class="t" style="left:441.30px;top:720.39px;font-size:13.30px;color:#ececec;transform:scaleX(0.8850);transform-origin:0 0;">71.6%</div>
<div class="t" style="left:605.30px;top:720.39px;font-size:13.30px;color:#ececec;transform:scaleX(0.8850);transform-origin:0 0;">538</div>
<div class="t" style="left:769.30px;top:720.39px;font-size:13.30px;color:#ececec;transform:scaleX(0.8850);transform-origin:0 0;">71.6%</div>
<div class="t" style="left:933.40px;top:720.39px;font-size:13.30px;color:#ececec;transform:scaleX(0.8850);transform-origin:0 0;">538</div>
<div class="t" style="left:1122.20px;top:720.39px;font-size:13.30px;color:#ececec;transform:scaleX(0.8850);transform-origin:0 0;">71.6%</div>
<div class="t" style="left:1286.20px;top:720.39px;font-size:13.30px;color:#ececec;transform:scaleX(0.8850);transform-origin:0 0;">20.0.1.9400</div>
<div class="abs" style="left:1422.6px;top:716.7px;width:92.4px;height:20px;overflow:hidden">
<div class="t" style="left:0.00px;top:3.74px;font-size:13.30px;color:#ececec;transform:scaleX(0.9350);transform-origin:0 0;">Just now</div>
<div class="t" style="left:52.87px;top:3.74px;font-size:13.30px;color:#8c8c8c;transform:scaleX(0.9500);transform-origin:0 0;">(2023-0</div>
</div>
<div class="abs" style="left:73.00px;top:741.00px;width:1442.00px;height:1.00px;background:#3a3a3a;"></div>
<svg class="abs" style="left:84px;top:753.0px" width="15" height="14" viewBox="0 0 15 14"><rect x="0" y="0" width="15" height="3.8" fill="#eeeeee"/><rect x="0" y="4.9" width="15" height="3.8" fill="#eeeeee"/><rect x="0" y="9.8" width="15" height="3.8" fill="#eeeeee"/><g fill="#555"><rect x="10.5" y="1.3" width="2.5" height="1"/><rect x="10.5" y="6.2" width="2.5" height="1"/><rect x="10.5" y="11.1" width="2.5" height="1"/></g></svg>
<div class="t" style="left:105.80px;top:753.24px;font-size:13.30px;color:#6f9cf0;transform:scaleX(0.9500);transform-origin:0 0;">randypavlik</div>
<div class="t" style="left:279.00px;top:753.24px;font-size:13.30px;color:#ececec;transform:scaleX(0.9500);transform-origin:0 0;">AIX</div>
<div class="t" style="left:411.30px;top:753.24px;font-size:13.30px;color:#ececec;">4</div>
<div class="t" style="left:441.30px;top:753.24px;font-size:13.30px;color:#ececec;transform:scaleX(0.8850);transform-origin:0 0;">71.5%</div>
<div class="t" style="left:605.30px;top:753.24px;font-size:13.30px;color:#ececec;transform:scaleX(0.8850);transform-origin:0 0;">298</div>
<div class="t" style="left:769.30px;top:753.24px;font-size:13.30px;color:#ececec;transform:scaleX(0.8850);transform-origin:0 0;">71.5%</div>
<div class="t" style="left:933.40px;top:753.24px;font-size:13.30px;color:#ececec;transform:scaleX(0.8850);transform-origin:0 0;">298</div>
<div class="t" style="left:1122.20px;top:753.24px;font-size:13.30px;color:#ececec;transform:scaleX(0.8850);transform-origin:0 0;">71.5%</div>
<div class="t" style="left:1286.20px;top:753.24px;font-size:13.30px;color:#ececec;transform:scaleX(0.8850);transform-origin:0 0;">20.0.1.17380</div>
<div class="abs" style="left:1422.6px;top:749.5px;width:92.4px;height:20px;overflow:hidden">
<div class="t" style="left:0.00px;top:3.74px;font-size:13.30px;color:#ececec;transform:scaleX(0.9350);transform-origin:0 0;">Just now</div>
<div class="t" style="left:52.87px;top:3.74px;font-size:13.30px;color:#8c8c8c;transform:scaleX(0.9500);transform-origin:0 0;">(2023-0</div>
</div>
<div class="abs" style="left:73.00px;top:774.00px;width:1442.00px;height:1.00px;background:#3a3a3a;"></div>
<svg class="abs" style="left:84px;top:785.9px" width="15" height="14" viewBox="0 0 15 14"><rect x="0" y="0" width="15" height="3.8" fill="#eeeeee"/><rect x="0" y="4.9" width="15" height="3.8" fill="#eeeeee"/><rect x="0" y="9.8" width="15" height="3.8" fill="#eeeeee"/><g fill="#555"><rect x="10.5" y="1.3" width="2.5" height="1"/><rect x="10.5" y="6.2" width="2.5" height="1"/><rect x="10.5" y="11.1" width="2.5" height="1"/></g></svg>
<div class="t" style="left:105.80px;top:786.09px;font-size:13.30px;color:#6f9cf0;transform:scaleX(0.9048);transform-origin:0 0;">02f874e967dd</div>
<div class="t" style="left:279.00px;top:786.09px;font-size:13.30px;color:#ececec;transform:scaleX(0.9500);transform-origin:0 0;">AIX</div>
<div class="t" style="left:411.30px;top:786.09px;font-size:13.30px;color:#ececec;">4</div>
<div class="t" style="left:441.30px;top:786.09px;font-size:13.30px;color:#ececec;transform:scaleX(0.8850);transform-origin:0 0;">70.8%</div>
<div class="t" style="left:605.30px;top:786.09px;font-size:13.30px;color:#ececec;transform:scaleX(0.8850);transform-origin:0 0;">459</div>
<div class="t" style="left:769.30px;top:786.09px;font-size:13.30px;color:#ececec;transform:scaleX(0.8850);transform-origin:0 0;">70.8%</div>
<div class="t" style="left:933.40px;top:786.09px;font-size:13.30px;color:#ececec;transform:scaleX(0.8850);transform-origin:0 0;">459</div>
<div class="t" style="left:1122.20px;top:786.09px;font-size:13.30px;color:#ececec;transform:scaleX(0.8850);transform-origin:0 0;">70.8%</div>
<div class="t" style="left:1286.20px;top:786.09px;font-size:13.30px;color:#ececec;transform:scaleX(0.8850);transform-origin:0 0;">20.0.1.690</div>
<div class="abs" style="left:1422.6px;top:782.4px;width:92.4px;height:20px;overflow:hidden">
<div class="t" style="left:0.00px;top:3.74px;font-size:13.30px;color:#ececec;transform:scaleX(0.9350);transform-origin:0 0;">Just now</div>
<div class="t" style="left:52.87px;top:3.74px;font-size:13.30px;color:#8c8c8c;transform:scaleX(0.9500);transform-origin:0 0;">(2023-0</div>
</div>
<div class="abs" style="left:73.00px;top:807.00px;width:1442.00px;height:1.00px;background:#3a3a3a;"></div>
<svg class="abs" style="left:83.5px;top:817.2px" width="16" height="15" viewBox="0 0 16 15"><rect x="1" y="1" width="13.5" height="9.5" fill="none" stroke="#eeeeee" stroke-width="1.8"/><path d="M7.75 10.5 L7.75 13 M4.5 13.6 L11 13.6" stroke="#eeeeee" stroke-width="1.7"/></svg>
<div class="t" style="left:105.80px;top:818.94px;font-size:13.30px;color:#6f9cf0;transform:scaleX(0.9252);transform-origin:0 0;">Win10RS6-32bit</div>
<div class="t" style="left:279.00px;top:818.94px;font-size:13.30px;color:#ececec;transform:scaleX(0.9500);transform-origin:0 0;">Windows</div>
<div class="t" style="left:411.30px;top:818.94px;font-size:13.30px;color:#ececec;">4</div>
<div class="t" style="left:441.30px;top:818.94px;font-size:13.30px;color:#ececec;transform:scaleX(0.8850);transform-origin:0 0;">58.7%</div>
<div class="t" style="left:605.30px;top:818.94px;font-size:13.30px;color:#ececec;transform:scaleX(0.8850);transform-origin:0 0;">620</div>
<div class="t" style="left:769.30px;top:818.94px;font-size:13.30px;color:#ececec;transform:scaleX(0.8850);transform-origin:0 0;">58.7%</div>
<div class="t" style="left:933.40px;top:818.94px;font-size:13.30px;color:#ececec;transform:scaleX(0.8850);transform-origin:0 0;">620</div>
<div class="t" style="left:1122.20px;top:818.94px;font-size:13.30px;color:#ececec;transform:scaleX(0.8850);transform-origin:0 0;">58.7%</div>
<div class="t" style="left:1286.20px;top:818.94px;font-size:13.30px;color:#ececec;transform:scaleX(0.8850);transform-origin:0 0;">20.0.1.690</div>
<div class="abs" style="left:1422.6px;top:815.2px;width:92.4px;height:20px;overflow:hidden">
<div class="t" style="left:0.00px;top:3.74px;font-size:13.30px;color:#ececec;transform:scaleX(0.9350);transform-origin:0 0;">Just n&nbsp; ow</div>
<div class="t" style="left:59.78px;top:3.74px;font-size:13.30px;color:#8c8c8c;transform:scaleX(0.9500);transform-origin:0 0;">(2023</div>
</div>
<div class="abs" style="left:73.00px;top:840.00px;width:1442.00px;height:1.00px;background:#3a3a3a;"></div>
<div class="abs" style="left:1327.0px;top:120.9px;width:59px;height:59px;border-radius:50%;background:#fff;border:3.6px solid #fd4848;box-shadow:1px 3px 5px rgba(0,0,0,0.55)"></div>
<svg class="abs" style="left:1348.0px;top:135.0px" width="14" height="26" viewBox="0 0 14 26" style="overflow:visible"><defs><filter id="bs" x="-50%" y="-50%" width="200%" height="200%"><feGaussianBlur stdDeviation="2"/></filter></defs><path d="M1.5 10.4 L8 5 L8 24.5" fill="none" stroke="rgba(0,0,0,0.3)" stroke-width="3.4" filter="url(#bs)" transform="translate(0.5,2.5)"/><path d="M1.4 10 L8.2 4.6 L8.2 24.8" fill="none" stroke="#111" stroke-width="3.1" stroke-linejoin="miter"/></svg>
<div class="abs" style="left:1333.5px;top:391.5px;width:59px;height:59px;border-radius:50%;background:#fff;border:3.6px solid #0fb393;box-shadow:1px 3px 5px rgba(0,0,0,0.55)"></div>
<div class="t" style="left:1352.25px;top:403.21px;font-size:34.00px;color:#111;text-shadow:0.5px 3px 4px rgba(0,0,0,0.35);">2</div>
<div class="abs" style="left:1363.0px;top:612.0px;width:59px;height:59px;border-radius:50%;background:#fff;border:3.6px solid #fcae17;box-shadow:1px 3px 5px rgba(0,0,0,0.55)"></div>
<div class="t" style="left:1381.15px;top:622.21px;font-size:34.00px;color:#111;text-shadow:0.5px 3px 4px rgba(0,0,0,0.35);">3</div>
<div class="box" style="left:59px;top:72px;width:1201px;height:205px;border-color:#fd4848"></div>
<div class="box" style="left:58px;top:277px;width:1460px;height:246px;border-color:#0fb393"></div>
<div class="box" style="left:58px;top:523px;width:1460px;height:329px;border-color:#fcae17"></div>
<div class="t" style="left:1215.00px;top:927.74px;font-size:13.30px;color:#9a9a9a;transform:scaleX(0.9650);transform-origin:0 0;">Total:</div>
<div class="t" style="left:1249.50px;top:927.74px;font-size:13.30px;color:#e6e6e6;">7</div>
<div class="abs" style="left:1263.50px;top:923.00px;width:1.00px;height:21.00px;background:#3a3a3a;"></div>
<div class="t" style="left:1282.00px;top:927.74px;font-size:13.30px;color:#e6e6e6;transform:scaleX(0.9395);transform-origin:0 0;">50 per page</div>
<svg class="abs" style="left:1355px;top:930px" width="11" height="8" viewBox="0 0 11 8"><path d="M1 1.5 L5.5 6 L10 1.5" fill="none" stroke="#e6e6e6" stroke-width="1.5"/></svg>
<div class="abs" style="left:1386.50px;top:923.00px;width:1.00px;height:21.00px;background:#3a3a3a;"></div>
<div class="abs" style="left:1393.7px;top:919px;width:29px;height:28.5px;border:1px solid #555;border-radius:2px"></div>
<div class="t" style="left:1404.50px;top:927.74px;font-size:13.30px;color:#e6e6e6;">1</div>
<div class="t" style="left:1430.50px;top:927.74px;font-size:13.30px;color:#e6e6e6;transform:scaleX(1.0482);transform-origin:0 0;">/ 1</div>
<div class="abs" style="left:1454.7px;top:919px;width:28.5px;height:28.5px;border:1px solid #333;border-radius:2px 0 0 2px"></div>
<div class="abs" style="left:1482.5px;top:919px;width:28.5px;height:28.5px;border:1px solid #555;border-radius:0 2px 2px 0"></div>
<svg class="abs" style="left:1464px;top:928px" width="10" height="11" viewBox="0 0 10 11"><path d="M6.5 1 L2.5 5.5 L6.5 10" fill="none" stroke="#4a4a4a" stroke-width="1.4"/></svg>
<svg class="abs" style="left:1492px;top:928px" width="10" height="11" viewBox="0 0 10 11"><path d="M3 1 L7 5.5 L3 10" fill="none" stroke="#e6e6e6" stroke-width="1.5"/></svg>
</body></html>
